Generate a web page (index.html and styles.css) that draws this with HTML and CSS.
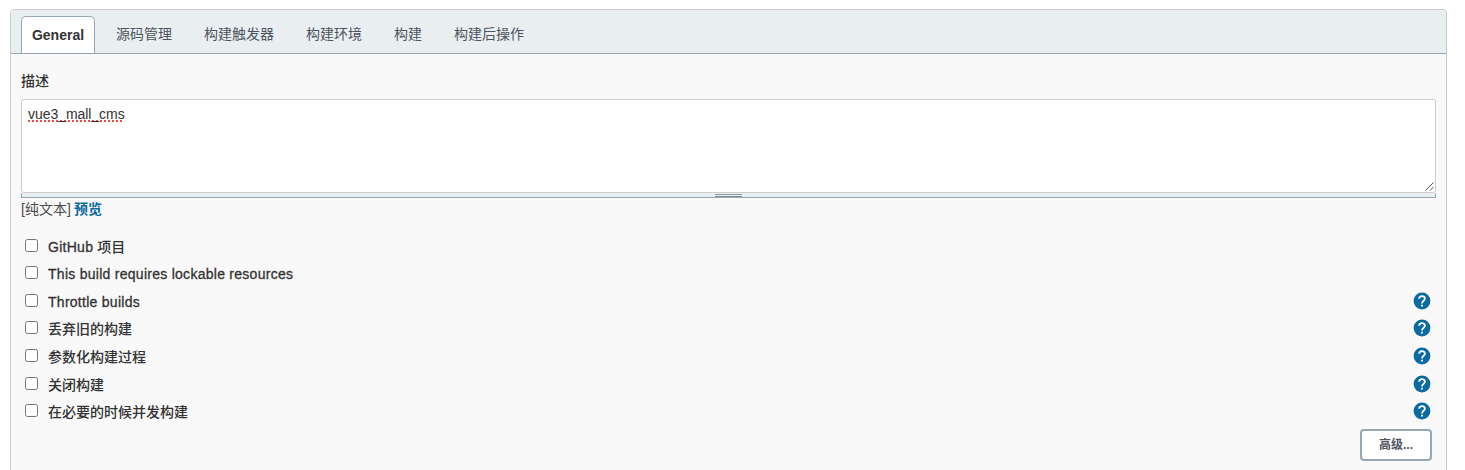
FILE: index.html
```html
<!DOCTYPE html>
<html lang="zh-CN">
<head>
<meta charset="utf-8">
<title>General</title>
<link rel="stylesheet" href="styles.css">
</head>
<body>
<svg class="sprite" aria-hidden="true">
  <symbol id="help" viewBox="0 0 18 18">
    <circle cx="9" cy="9" r="8.4" fill="#0b6aa2"/>
    <path d="M6.100 6.700C6.200 3.400 11.900 3.300 11.900 6.600C11.900 8.700 9 8.900 9 11.500" fill="none" stroke="#fff" stroke-width="1.8"/>
    <rect x="8.100" y="12.700" width="1.800" height="1.800" fill="#fff"/>
  </symbol>
</svg>
<main class="panel">
  <nav class="tabs">
    <a class="tab active">General</a>
    <a class="tab">源码管理</a>
    <a class="tab">构建触发器</a>
    <a class="tab">构建环境</a>
    <a class="tab">构建</a>
    <a class="tab">构建后操作</a>
  </nav>
  <section class="form">
    <div class="label">描述</div>
    <div class="textarea">
      <span class="misspelled">vue3_mall_cms</span>
      <svg class="grip" width="9" height="9" viewBox="0 0 9 9"><path d="M.5 8.500l8-8M5 8.500l3.500-3.500" stroke="#555" fill="none"/></svg>
    </div>
    <div class="handle"><span class="handle-lines"></span></div>
    <div class="preview">[纯文本] <a class="link">预览</a></div>
    <div class="options">
      <label class="option"><input type="checkbox" class="check"><span class="name latin">GitHub <span class="cjk">项目</span></span></label>
      <label class="option"><input type="checkbox" class="check"><span class="name latin">This build requires lockable resources</span></label>
      <label class="option"><input type="checkbox" class="check"><span class="name latin">Throttle builds</span><svg class="help"><use href="#help"/></svg></label>
      <label class="option"><input type="checkbox" class="check"><span class="name">丢弃旧的构建</span><svg class="help"><use href="#help"/></svg></label>
      <label class="option"><input type="checkbox" class="check"><span class="name">参数化构建过程</span><svg class="help"><use href="#help"/></svg></label>
      <label class="option"><input type="checkbox" class="check"><span class="name">关闭构建</span><svg class="help"><use href="#help"/></svg></label>
      <label class="option"><input type="checkbox" class="check"><span class="name">在必要的时候并发构建</span><svg class="help"><use href="#help"/></svg></label>
    </div>
    <div class="actions"><button class="advanced">高级...</button></div>
  </section>
</main>
</body>
</html>
```
FILE: styles.css
```css
* { box-sizing: border-box; }
body {
  margin: 0;
  height: 470px;
  overflow: hidden;
  padding: 9px 18px 0 10px;
  background: #fff;
  color: #333;
  font: 14px/20px "Liberation Sans", "Noto Sans CJK SC", sans-serif;
}
.sprite { display: none; }
.panel {
  height: 480px;
  border: 1px solid #ccc;
  border-radius: 4px 4px 0 0;
  background: #f9f9f9;
  overflow: hidden;
}
.tabs {
  display: flex;
  align-items: flex-end;
  height: 44px;
  padding-left: 10px;
  background: #e9eef1;
  border-bottom: 1px solid #98a6b3;
}
.tab {
  height: 37px;
  padding: 8px 11px 0 21px;
  color: #4d545d;
}
.tab.active {
  width: 74px;
  padding: 8px 0 0;
  text-align: center;
  border: 1px solid #98a6b3;
  border-bottom: 0;
  border-radius: 5px 5px 0 0;
  background: #fff;
  color: #333;
  font-weight: bold;
}
.form { padding: 17px 10px 0; }
.label { height: 28px; font-weight: 500; }
.textarea {
  position: relative;
  height: 94px;
  padding: 4px 6px;
  border: 1px solid #ccc;
  border-radius: 3px;
  background: #fff;
}
.misspelled {
  letter-spacing: -.05px;
  text-decoration: underline dotted #ef4b49 2px;
  text-decoration-skip-ink: none;
  text-underline-offset: 1px;
}
.grip { position: absolute; right: 1px; bottom: 1px; }
.handle {
  display: flex;
  justify-content: center;
  height: 5px;
  border: 1px solid #98a9b3;
  border-top: 0;
  background: #e9eef1;
}
.handle-lines {
  width: 27px;
  height: 3px;
  margin-top: 1px;
  border-top: 1px solid #929c94;
  border-bottom: 1px solid #808c90;
}
.preview { padding-top: 1px; height: 35px; color: #4a4a4a; }
.link { margin-left: -.6px; color: #0b6aa2; font-weight: bold; }
.option {
  display: flex;
  align-items: flex-start;
  height: 27.55px;
  padding: 3.8px 4px 0;
  font-weight: 500;
}
.check {
  appearance: none;
  flex: none;
  width: 13px;
  height: 13px;
  margin: 2px 10px 0 0;
  border: 1px solid #767676;
  border-radius: 2.5px;
  background: #fff;
}
.latin {
  letter-spacing: .27px;
  -webkit-text-stroke: .3px currentColor;
}
.cjk { letter-spacing: 0; -webkit-text-stroke: 0; }
.help { width: 18px; height: 18px; margin: 0 1px 0 auto; }
.actions { display: flex; justify-content: flex-end; padding: 3px 4px 0 0; }
.advanced {
  width: 72px;
  height: 32px;
  padding: 0;
  border: 2px solid #98a6b3;
  border-radius: 4px;
  background: #fff;
  color: #4d545d;
  font: bold 12px/20px "Liberation Sans", "Noto Sans CJK SC", sans-serif;
}
```
